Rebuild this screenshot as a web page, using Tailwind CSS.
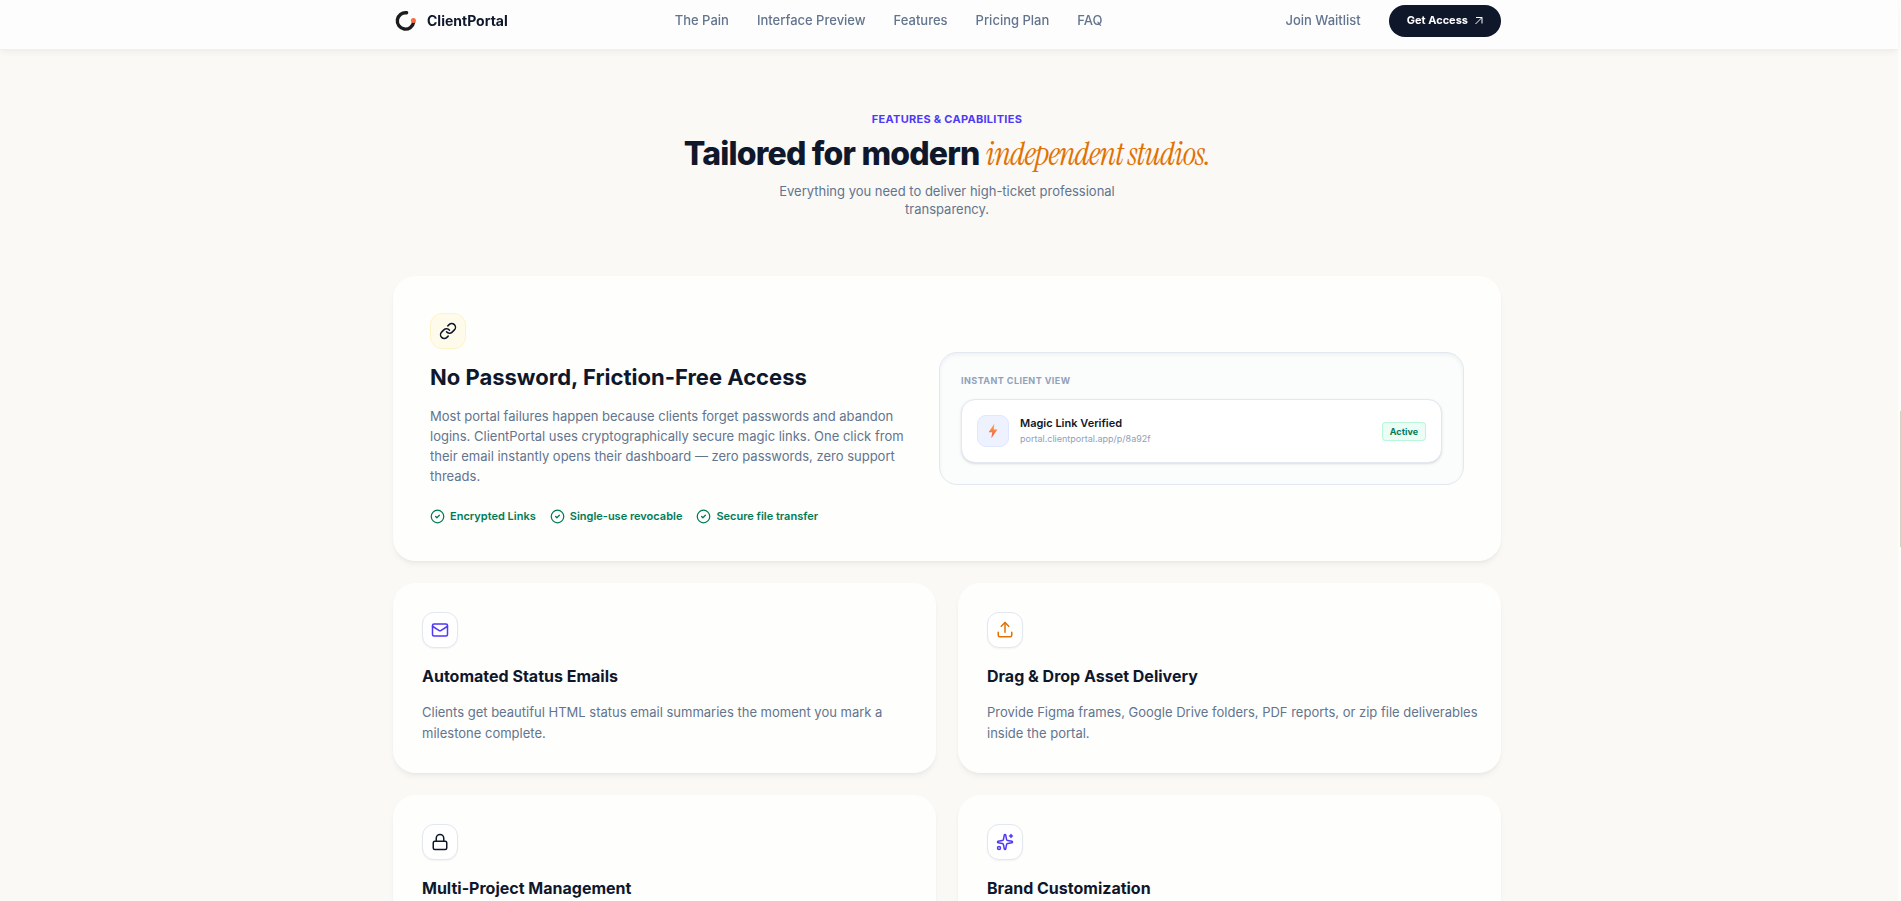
<!DOCTYPE html>
<html lang="en">
<head>
    <meta charset="UTF-8">
    <meta name="viewport" content="width=device-width, initial-scale=1.0">
    <title>ClientPortal</title>
    <script src="https://cdn.jsdelivr.net/npm/@tailwindcss/browser@4"></script>
</head>
<body class="bg-[#faf9f6] font-['Inter',sans-serif] text-slate-900 h-screen overflow-hidden pr-[7px]">
    <!-- Scroll indicator -->
    <div class="fixed inset-y-0 right-0 w-[3px] bg-[#fcfcfa]">
        <div class="absolute right-0 top-[411px] w-px h-[136px] bg-[#d6d3c4]"></div>
    </div>

    <!-- Navbar -->
    <header class="relative -mr-1 pr-1 bg-[#fdfdfd] border-b border-slate-200/60 shadow-md shadow-black/4">
        <div class="max-w-[1108px] mx-auto h-[49px] pb-2 flex items-center justify-between">
            <a href="#" class="flex items-center gap-2.5 pl-0.5">
                <svg class="w-[22px] h-[22px]" viewBox="0 0 22 22" fill="none">
                    <path d="M11.6 2.8A8.2 8.2 0 1 0 18.6 12.2" stroke="#1c1c1e" stroke-width="3.4" stroke-linecap="round"/>
                    <circle cx="18.4" cy="10.4" r="2.5" fill="#ff6a3d"/>
                </svg>
                <span class="text-[14px] font-bold">ClientPortal</span>
            </a>
            <nav class="flex items-center gap-7 text-[13px] font-medium text-slate-500">
                <a href="#">The Pain</a>
                <a href="#">Interface Preview</a>
                <a href="#features">Features</a>
                <a href="#">Pricing Plan</a>
                <a href="#">FAQ</a>
            </nav>
            <div class="flex items-center gap-7 pl-4">
                <a href="#" class="text-[13px] font-medium text-slate-500">Join Waitlist</a>
                <button type="button" class="h-8 px-[18px] flex items-center gap-1.5 rounded-full bg-slate-900 text-white text-[11px] font-bold">
                    Get Access
                    <svg class="w-[9px] h-[9px]" viewBox="0 0 9 9" fill="none" stroke="currentColor" stroke-width="1"><path d="M1.5 8 8 1.5M2 1.5h6v6"/></svg>
                </button>
            </div>
        </div>
    </header>

    <!-- Features -->
    <main id="features" class="max-w-[1108px] mx-auto pt-[61px]">
        <div class="text-center">
            <p class="text-[11px] leading-4 font-bold tracking-wide text-indigo-600">FEATURES &amp; CAPABILITIES</p>
            <h2 class="mt-[9px] text-[32px] leading-9 font-extrabold tracking-tight">Tailored for modern <em class="font-['Instrument_Serif','Liberation_Serif',serif] font-normal text-amber-600">independent studios.</em></h2>
            <p class="mt-2.5 mx-auto max-w-[350px] text-[13px] leading-[18px] text-slate-500">Everything you need to deliver high-ticket professional transparency.</p>
        </div>

        <div class="mt-[58px] grid grid-cols-2 gap-[22px]">
            <section class="col-span-2 rounded-[22px] border border-[#fefefd] bg-[#fefefd] shadow-md shadow-black/5 p-9 grid grid-cols-[477fr_525fr] gap-8 items-center">
                <div>
                    <div class="w-9 h-9 rounded-xl bg-amber-50 border border-amber-100 flex items-center justify-center">
                        <svg class="w-[18px] h-[18px]" viewBox="0 0 24 24" fill="none" stroke="currentColor" stroke-width="2" stroke-linecap="round" stroke-linejoin="round"><path d="M10 13a5 5 0 0 0 7.54.54l3-3a5 5 0 0 0-7.07-7.07l-1.72 1.71"/><path d="M14 11a5 5 0 0 0-7.54-.54l-3 3a5 5 0 0 0 7.07 7.07l1.71-1.71"/></svg>
                    </div>
                    <h3 class="mt-3 text-[22px] leading-8 font-bold">No Password, Friction-Free Access</h3>
                    <p class="mt-[13px] text-[13px] leading-5 text-slate-500">Most portal failures happen because clients forget passwords and abandon logins. ClientPortal uses cryptographically secure magic links. One click from their email instantly opens their dashboard — zero passwords, zero support threads.</p>
                    <ul class="mt-[22px] flex gap-3.5 text-[11px] leading-4 font-semibold text-emerald-700">
                        <li class="flex items-center gap-[5px]"><svg class="w-[15px] h-[15px]" viewBox="0 0 24 24" fill="none" stroke="currentColor" stroke-width="2" stroke-linecap="round" stroke-linejoin="round"><circle cx="12" cy="12" r="10"/><path d="m9 12 2 2 4-4"/></svg>Encrypted Links</li>
                        <li class="flex items-center gap-[5px]"><svg class="w-[15px] h-[15px]" viewBox="0 0 24 24" fill="none" stroke="currentColor" stroke-width="2" stroke-linecap="round" stroke-linejoin="round"><circle cx="12" cy="12" r="10"/><path d="m9 12 2 2 4-4"/></svg>Single-use revocable</li>
                        <li class="flex items-center gap-[5px]"><svg class="w-[15px] h-[15px]" viewBox="0 0 24 24" fill="none" stroke="currentColor" stroke-width="2" stroke-linecap="round" stroke-linejoin="round"><circle cx="12" cy="12" r="10"/><path d="m9 12 2 2 4-4"/></svg>Secure file transfer</li>
                    </ul>
                </div>
                <div class="rounded-[18px] border border-slate-200 bg-[#fbfcfc] inset-shadow-sm p-[21px]">
                    <p class="text-[9px] leading-[14px] font-bold tracking-wider text-slate-400">INSTANT CLIENT VIEW</p>
                    <div class="mt-[11px] rounded-[14px] border border-slate-200 bg-white shadow-sm p-[15px] flex items-center gap-[11px]">
                        <div class="w-8 h-8 rounded-[9px] bg-indigo-50 border border-indigo-100 flex items-center justify-center">
                            <svg class="w-3.5 h-4" viewBox="0 0 14 16"><defs><linearGradient id="bolt" x1="0" y1="0" x2="0" y2="1"><stop stop-color="#fbb040"/><stop offset="1" stop-color="#f0524f"/></linearGradient></defs><path d="M8.3.8 2.6 9.2h3.6L5.3 15.2 11.4 6.6H7.8z" fill="url(#bolt)"/></svg>
                        </div>
                        <div class="flex-1">
                            <p class="text-[11px] leading-4 font-semibold">Magic Link Verified</p>
                            <p class="text-[9px] leading-4 text-slate-400">portal.clientportal.app/p/8a92f</p>
                        </div>
                        <span class="px-[7px] rounded border border-emerald-200/70 bg-emerald-50 text-[9px] leading-[17px] font-bold text-emerald-700">Active</span>
                    </div>
                </div>
            </section>

            <section class="rounded-[22px] border border-[#fefefd] bg-[#fefefd] shadow-md shadow-black/5 py-7 pl-7 pr-5">
                <div class="w-9 h-9 rounded-xl bg-white border border-slate-200 shadow-xs flex items-center justify-center text-indigo-600">
                    <svg class="w-[18px] h-[18px]" viewBox="0 0 24 24" fill="none" stroke="currentColor" stroke-width="2" stroke-linecap="round" stroke-linejoin="round"><rect x="2" y="4" width="20" height="16" rx="2"/><path d="m22 7-8.97 5.7a1.94 1.94 0 0 1-2.06 0L2 7"/></svg>
                </div>
                <h3 class="mt-4 text-[16px] leading-6 font-bold">Automated Status Emails</h3>
                <p class="mt-3.5 text-[13px] leading-[21px] text-slate-500">Clients get beautiful HTML status email summaries the moment you mark a milestone complete.</p>
            </section>

            <section class="rounded-[22px] border border-[#fefefd] bg-[#fefefd] shadow-md shadow-black/5 py-7 pl-7 pr-5">
                <div class="w-9 h-9 rounded-xl bg-white border border-slate-200 shadow-xs flex items-center justify-center text-amber-600">
                    <svg class="w-[18px] h-[18px]" viewBox="0 0 24 24" fill="none" stroke="currentColor" stroke-width="2" stroke-linecap="round" stroke-linejoin="round"><path d="M21 15v4a2 2 0 0 1-2 2H5a2 2 0 0 1-2-2v-4"/><path d="m17 7-5-5-5 5"/><path d="M12 2v13"/></svg>
                </div>
                <h3 class="mt-4 text-[16px] leading-6 font-bold">Drag &amp; Drop Asset Delivery</h3>
                <p class="mt-3.5 text-[13px] leading-[21px] text-slate-500">Provide Figma frames, Google Drive folders, PDF reports, or zip file deliverables inside the portal.</p>
            </section>

            <section class="rounded-[22px] border border-[#fefefd] bg-[#fefefd] shadow-md shadow-black/5 py-7 pl-7 pr-5">
                <div class="w-9 h-9 rounded-xl bg-white border border-slate-200 shadow-xs flex items-center justify-center">
                    <svg class="w-[18px] h-[18px]" viewBox="0 0 24 24" fill="none" stroke="currentColor" stroke-width="2" stroke-linecap="round" stroke-linejoin="round"><rect x="3" y="11" width="18" height="11" rx="2"/><path d="M7 11V7a5 5 0 0 1 10 0v4"/></svg>
                </div>
                <h3 class="mt-4 text-[16px] leading-6 font-bold">Multi-Project Management</h3>
                <p class="mt-3.5 text-[13px] leading-[21px] text-slate-500"></p>
            </section>

            <section class="rounded-[22px] border border-[#fefefd] bg-[#fefefd] shadow-md shadow-black/5 py-7 pl-7 pr-5">
                <div class="w-9 h-9 rounded-xl bg-white border border-slate-200 shadow-xs flex items-center justify-center text-indigo-600">
                    <svg class="w-[18px] h-[18px]" viewBox="0 0 24 24" fill="none" stroke="currentColor" stroke-width="2" stroke-linecap="round" stroke-linejoin="round"><path d="M11.017 2.814a1 1 0 0 1 1.966 0l1.051 5.558a2 2 0 0 0 1.594 1.594l5.558 1.051a1 1 0 0 1 0 1.966l-5.558 1.051a2 2 0 0 0-1.594 1.594l-1.051 5.558a1 1 0 0 1-1.966 0l-1.051-5.558a2 2 0 0 0-1.594-1.594l-5.558-1.051a1 1 0 0 1 0-1.966l5.558-1.051a2 2 0 0 0 1.594-1.594z"/><path d="M20 2v4"/><path d="M22 4h-4"/><circle cx="4" cy="20" r="2"/></svg>
                </div>
                <h3 class="mt-4 text-[16px] leading-6 font-bold">Brand Customization</h3>
                <p class="mt-3.5 text-[13px] leading-[21px] text-slate-500"></p>
            </section>
        </div>
    </main>
</body>
</html>
